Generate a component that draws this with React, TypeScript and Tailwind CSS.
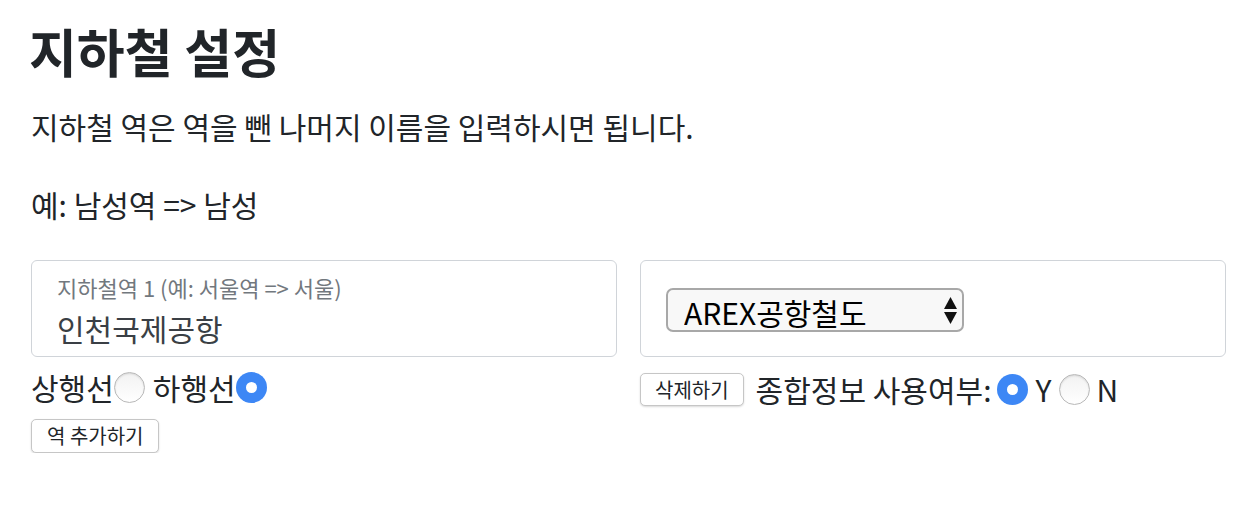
import { useState } from 'react'

function Radio({ checked, onClick }: { checked: boolean; onClick?: () => void }) {
  return (
    <span
      onClick={onClick}
      className={`inline-flex w-[31px] h-[31px] rounded-full items-center justify-center flex-shrink-0 cursor-pointer ${
        checked
          ? 'bg-[#3d87f5]'
          : 'bg-gradient-to-b from-[#f2f2f2] to-white border border-[#b9b9b9] shadow-[inset_0_1px_2px_rgba(0,0,0,0.12)]'
      }`}
    >
      {checked && <span className="w-[11px] h-[11px] rounded-full bg-white" />}
    </span>
  )
}

export default function App() {
  const [dir, setDir] = useState<'up' | 'down'>('down')
  const [useInfo, setUseInfo] = useState(true)
  const [station, setStation] = useState('인천국제공항')
  const [line, setLine] = useState('AREX공항철도')

  return (
    <div className="pl-[31px] pr-[24px] pt-[20px] text-[#212529] font-['Noto_Sans_CJK_KR','Noto_Sans',sans-serif]">
      <h1 className="text-[52px] font-bold leading-[1.2] -ml-[2px]">지하철 설정</h1>
      <p className="mt-[22px] text-[30px] leading-[1.5]">지하철 역은 역을 뺀 나머지 이름을 입력하시면 됩니다.</p>
      <p className="mt-[33px] text-[30px] leading-[1.5]">예: 남성역 =&gt; 남성</p>

      <div className="grid grid-cols-2 gap-[23px] mt-[33px]">
        {/* 역 입력 */}
        <div>
          <div className="h-[97px] border border-[#d0d4d9] rounded-[6px] px-[25px] pt-[10px] flex flex-col">
            <label className="text-[22px] leading-[1.5] text-[#72787e]">지하철역 1 (예: 서울역 =&gt; 서울)</label>
            <input
              value={station}
              onChange={e => setStation(e.target.value)}
              className="mt-[3px] text-[30px] leading-[1.4] text-[#3a3f45] outline-none bg-transparent"
            />
          </div>
          <div className="flex items-center mt-[11px] text-[30px] leading-[1.3]">
            <span>상행선</span>
            <Radio checked={dir === 'up'} onClick={() => setDir('up')} />
            <span className="ml-[8px]">하행선</span>
            <Radio checked={dir === 'down'} onClick={() => setDir('down')} />
          </div>
          <button className="mt-[12px] h-[34px] px-[15px] text-[20px] leading-none bg-white border border-[#c6c6c6] rounded-[5px] shadow-[0_1px_2px_rgba(0,0,0,0.15)]">
            역 추가하기
          </button>
        </div>

        {/* 노선 선택 */}
        <div>
          <div className="h-[97px] border border-[#d0d4d9] rounded-[6px] pl-[25px] pt-[2px] flex items-center">
            <div className="relative w-[298px] h-[44px]">
              <select
                value={line}
                onChange={e => setLine(e.target.value)}
                className="appearance-none w-full h-full bg-[#f8f8f8] border-2 border-[#a8a8a8] rounded-[7px] pl-[16px] text-[30px] text-black outline-none"
              >
                <option>AREX공항철도</option>
                <option>1호선</option>
                <option>2호선</option>
              </select>
              <svg className="absolute right-[7px] top-[9px] pointer-events-none" width="13" height="27" viewBox="0 0 13 27">
                <polygon points="6.5,0 13,12 0,12" fill="#111" />
                <polygon points="0,15 13,15 6.5,27" fill="#111" />
              </svg>
            </div>
          </div>
          <div className="flex items-center mt-[13px] text-[30px] leading-[1.3]">
            <button className="h-[33px] px-[14px] text-[20px] leading-none bg-white border border-[#c6c6c6] rounded-[5px] shadow-[0_1px_2px_rgba(0,0,0,0.15)]">
              삭제하기
            </button>
            <span className="ml-[12px]">종합정보 사용여부:</span>
            <span className="ml-[6px] flex"><Radio checked={useInfo} onClick={() => setUseInfo(true)} /></span>
            <span className="ml-[7px]">Y</span>
            <span className="ml-[8px] flex"><Radio checked={!useInfo} onClick={() => setUseInfo(false)} /></span>
            <span className="ml-[6px]">N</span>
          </div>
        </div>
      </div>
    </div>
  )
}
